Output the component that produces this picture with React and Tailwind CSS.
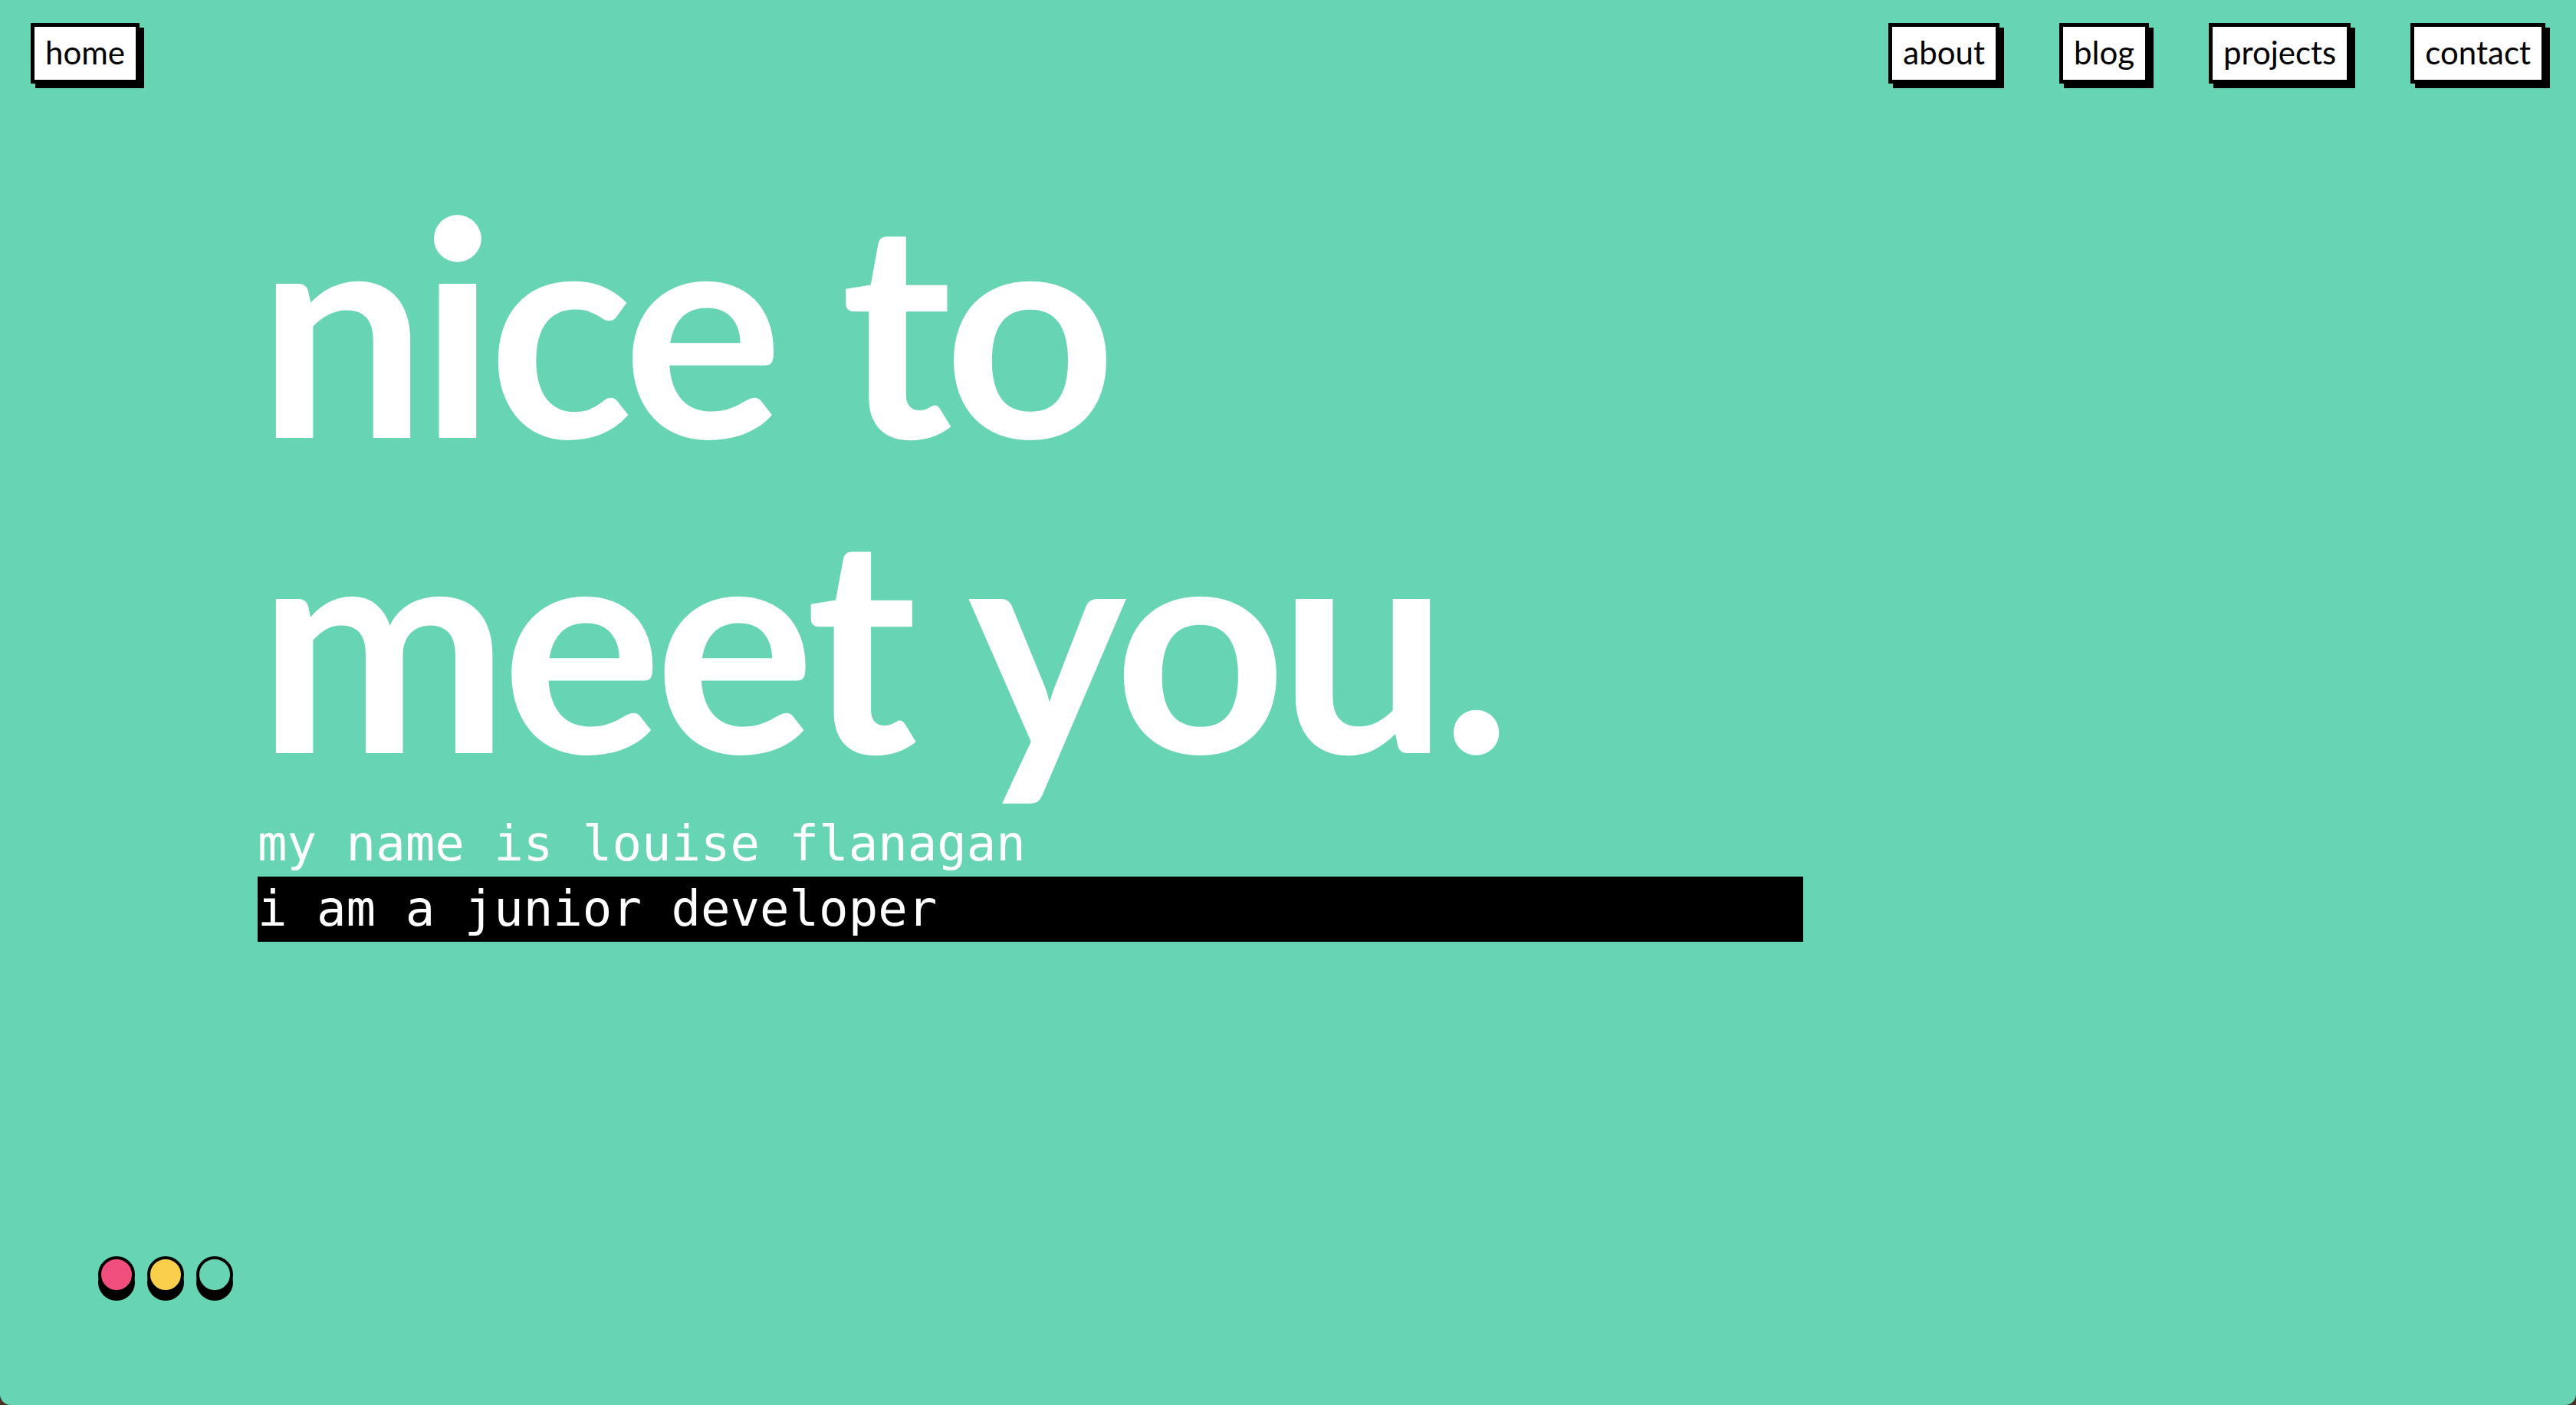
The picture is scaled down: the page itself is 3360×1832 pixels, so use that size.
import React from 'react';

const navItems = ['about', 'blog', 'projects', 'contact'];

const NavButton = ({ label }) => (
    <a
        href="#"
        className="flex items-center h-[79px] px-[14px] bg-white border-[5px] border-black shadow-[6px_6px_0_#000] text-black text-[42px] leading-none pb-[4px]"
    >
        {label}
    </a>
);

const App = () => {
    return (
        <div className="w-full h-screen bg-[#4a2f25]">
            <div
                className="flex flex-col w-full h-full bg-[#67d5b3] rounded-b-[14px] overflow-hidden"
                style={{ fontFamily: 'Lato, "Noto Sans", sans-serif' }}
            >
                {/* nav */}
                <nav className="flex items-start justify-between pt-[30px] px-[40px]">
                    <NavButton label="home" />
                    <div className="flex gap-[78px]">
                        {navItems.map((item) => (
                            <NavButton key={item} label={item} />
                        ))}
                    </div>
                </nav>

                {/* hero */}
                <main className="flex-1 pl-[10%] pt-[105px]">
                    <h1 className="text-white font-bold text-[392px] leading-[411px] tracking-[-10px]">
                        nice to
                        <br />
                        meet you.
                    </h1>
                    <div
                        className="mt-[22px] text-white text-[64px] leading-[85px]"
                        style={{ fontFamily: '"DejaVu Sans Mono", "Liberation Mono", monospace' }}
                    >
                        <p>my name is louise flanagan</p>
                        <p className="w-[60vw] bg-black">i am a junior developer</p>
                    </div>
                </main>

                {/* dots */}
                <div className="flex gap-[16px] pl-[128px] pb-[146px]">
                    <span className="w-[48px] h-[48px] rounded-full border-[4px] border-black bg-[#f04e7c] shadow-[0_10px_0_#000]" />
                    <span className="w-[48px] h-[48px] rounded-full border-[4px] border-black bg-[#f9cf4b] shadow-[0_10px_0_#000]" />
                    <span className="w-[48px] h-[48px] rounded-full border-[4px] border-black bg-[#67d5b3] shadow-[0_10px_0_#000]" />
                </div>
            </div>
        </div>
    );
};

export default App;
